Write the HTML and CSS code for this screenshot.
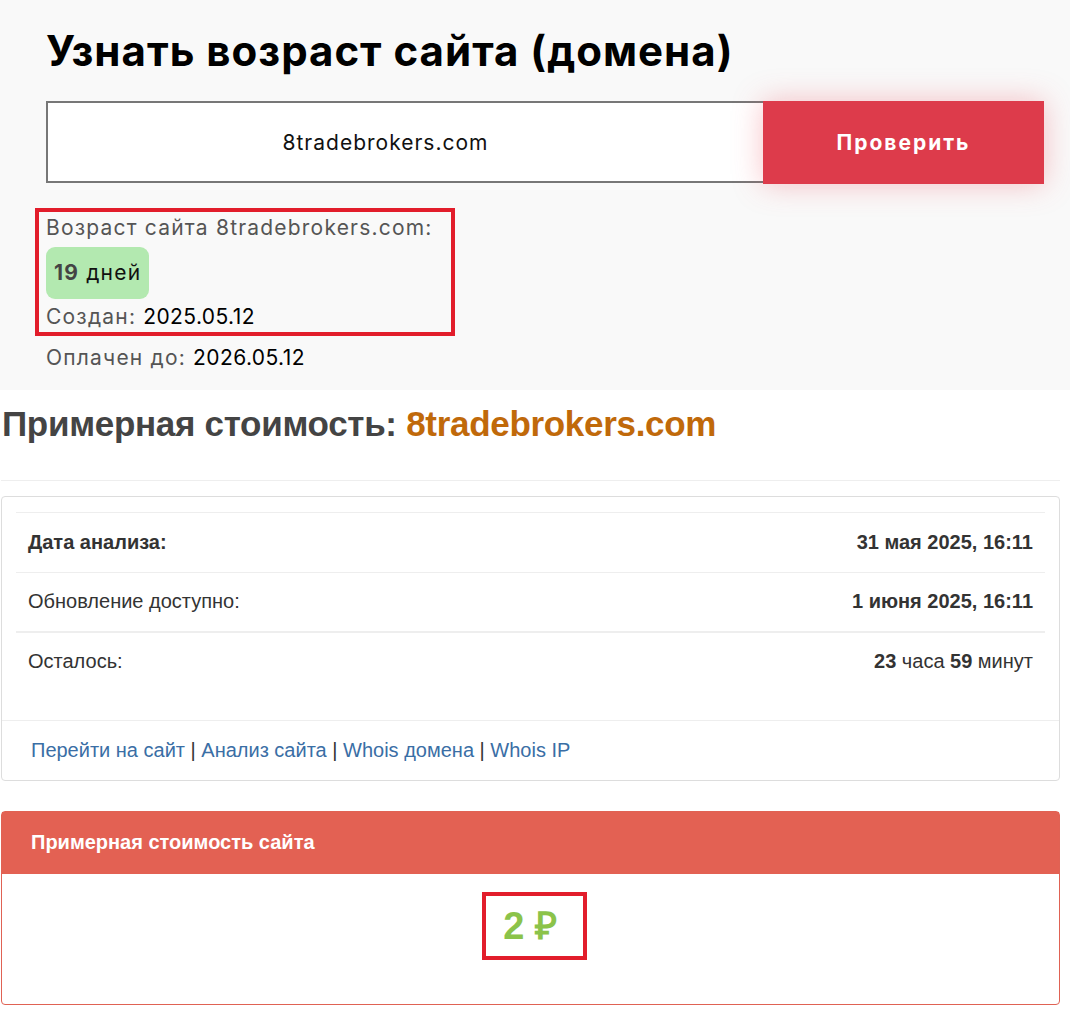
FILE: index.html
```html
<!DOCTYPE html>
<html>
<head>
    <meta charset="utf-8">
    <link rel="stylesheet" href="styles.css">
</head>
<body>
    <div class="age-block">
        <h1 class="age-title">Узнать возраст сайта (домена)</h1>
        <form class="check-form">
            <input class="check-input" type="text" value="8tradebrokers.com">
            <button class="check-btn" type="button">Проверить</button>
        </form>
        <div class="age-result">
            <div class="mark-box">
                <p class="age-line">Возраст сайта 8tradebrokers.com:</p>
                <span class="age-badge"><b>19</b> дней</span>
                <p class="age-line created">Создан: <span class="val">2025.05.12</span></p>
            </div>
            <p class="age-line paid">Оплачен до: <span class="val">2026.05.12</span></p>
        </div>
    </div>

    <div class="cost-block">
        <h2 class="cost-title">Примерная стоимость: <span class="domain">8tradebrokers.com</span></h2>
        <hr class="sep">

        <div class="panel">
            <div class="panel-body">
                <table class="info-table">
                    <tr>
                        <td><b>Дата анализа:</b></td>
                        <td class="right"><b>31 мая 2025, 16:11</b></td>
                    </tr>
                    <tr class="mid">
                        <td>Обновление доступно:</td>
                        <td class="right"><b>1 июня 2025, 16:11</b></td>
                    </tr>
                    <tr class="last">
                        <td>Осталось:</td>
                        <td class="right"><b>23</b> часа <b>59</b> минут</td>
                    </tr>
                </table>
            </div>
            <div class="panel-footer">
                <a href="#">Перейти на сайт</a> | <a href="#">Анализ сайта</a> | <a href="#">Whois домена</a> | <a href="#">Whois IP</a>
            </div>
        </div>

        <div class="panel panel-red">
            <div class="panel-heading">Примерная стоимость сайта</div>
            <div class="price-body">
                <span class="price">2 ₽</span>
            </div>
        </div>
    </div>
</body>
</html>
```

FILE: styles.css
```css
* {
    box-sizing: border-box;
}
body {
    margin: 0;
    background: #fff;
    font-family: "Liberation Sans", Arial, sans-serif;
    color: #333;
}
p {
    margin: 0;
}

/* top block */
.age-block {
    background: #f9f9f9;
    padding: 26px 26px 0 46px;
    font-family: Inter, "Open Sans", sans-serif;
    height: 390px;
}
.age-title {
    margin: 0 0 25px 0;
    font-size: 42px;
    font-weight: 700;
    letter-spacing: 1px;
    color: #000;
    line-height: 50px;
}
.check-form {
    display: flex;
    width: 998px;
}
.check-input {
    width: 717px;
    height: 82px;
    border: 2px solid #777;
    border-right: none;
    padding: 0 40px 0 0;
    background: #fff;
    text-align: center;
    font-family: Inter, sans-serif;
    font-size: 21px;
    letter-spacing: 1px;
    color: #111;
    outline: none;
}
.check-btn {
    width: 281px;
    height: 83px;
    border: none;
    background: #dd3b4b;
    color: #fff;
    font-family: Inter, sans-serif;
    font-size: 21px;
    font-weight: 700;
    letter-spacing: 2px;
    box-shadow: 0 0 30px rgba(235, 80, 95, 0.35);
}
.age-result {
    margin-top: 24px;
    margin-left: -11px;
}
.mark-box {
    width: 420px;
    border: 4px solid #e21d2b;
    padding: 1px 7px 1px 7px;
}
.age-line {
    font-size: 21px;
    letter-spacing: 1.2px;
    color: #555;
    line-height: 30px;
}
.age-line .val {
    color: #000;
    letter-spacing: 0.4px;
}
.age-line.created {
    line-height: 28px;
}
.age-badge {
    display: block;
    width: fit-content;
    margin: 4px 0 4px 0;
    padding: 10px 8px;
    background: #b3e9b0;
    border-radius: 9px;
    font-size: 21px;
    letter-spacing: 1.2px;
    line-height: 32px;
    color: #111;
}
.age-badge b {
    color: #444;
}
.paid {
    margin-top: 7px;
    margin-left: 11px;
}

/* cost block */
.cost-block {
    padding: 0 10px 0 1px;
}
.cost-title {
    margin: 12px 0 0 1px;
    font-size: 35px;
    font-weight: 700;
    letter-spacing: -0.3px;
    color: #444;
    line-height: 44px;
}
.domain {
    color: #c0690a;
}
.sep {
    margin: 34px 0 15px 0;
    border: 0;
    border-top: 1px solid #eee;
}
.panel {
    border: 1px solid #ddd;
    border-radius: 4px;
    margin-bottom: 30px;
    background: #fff;
}
.panel-body {
    padding: 15px 14px 0 14px;
}
.info-table {
    width: 100%;
    border-collapse: collapse;
    font-size: 20px;
    color: #333;
}
.info-table td {
    border-top: 1px solid #eee;
    height: 60px;
    padding: 0 12px;
}
.info-table tr.mid td {
    height: 59px;
}
.info-table tr.last td {
    border-top: 2px solid #eee;
    vertical-align: top;
    padding-top: 17px;
    height: 88px;
}
.info-table .right {
    text-align: right;
}
.panel-footer {
    border-top: 1px solid #eee;
    padding: 17px 29px 18px 29px;
    font-size: 20px;
    line-height: 24px;
    color: #333;
}
.panel-footer a {
    color: #3a6ea5;
    text-decoration: none;
}
.panel-red {
    border-color: #e06254;
}
.panel-red .panel-heading {
    background: #e36153;
    color: #fff;
    font-size: 20px;
    font-weight: 700;
    padding: 19px 29px;
    height: 62px;
}
.price-body {
    display: flex;
    justify-content: center;
    padding: 18px 0 44px 8px;
}
.price {
    display: inline-block;
    border: 4px solid #e21d2b;
    padding: 8px 26px 8px 17px;
    font-size: 38px;
    font-weight: 700;
    color: #8bc34a;
    line-height: 44px;
}
```
